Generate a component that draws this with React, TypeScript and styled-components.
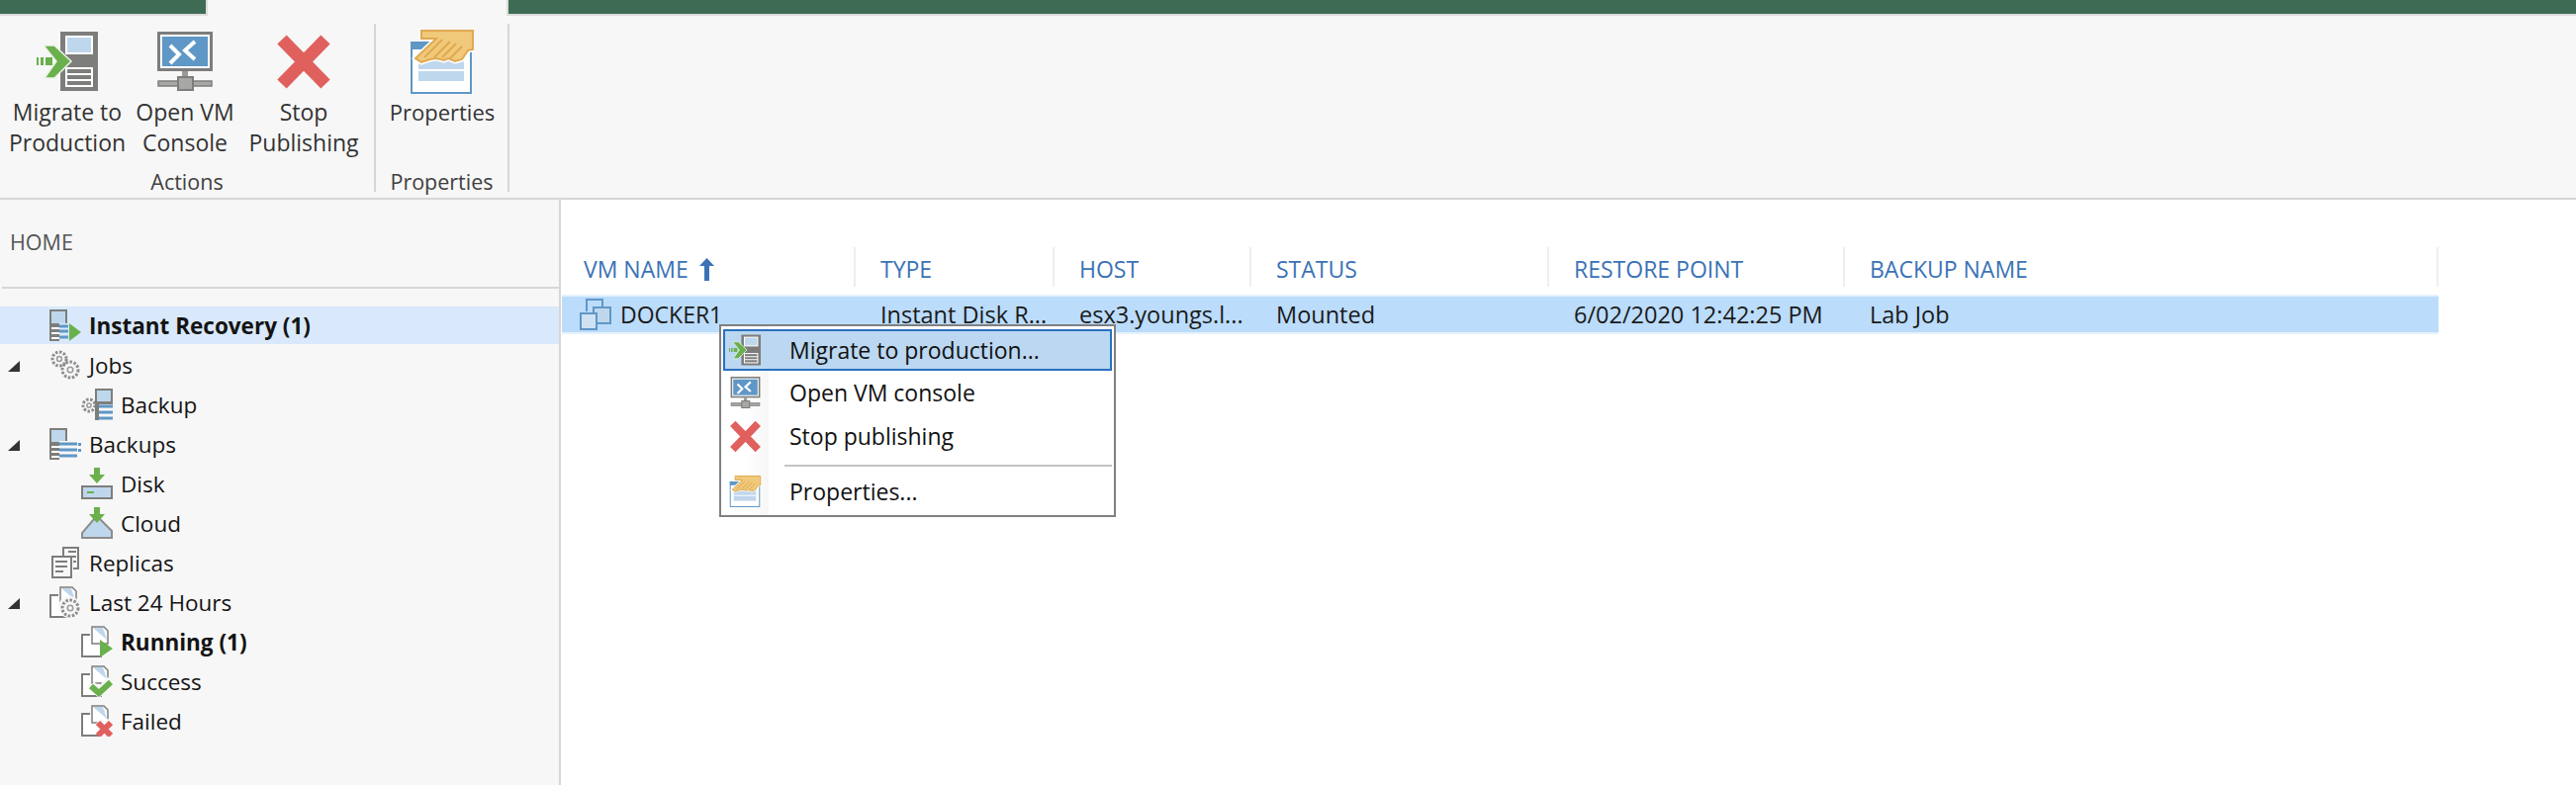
import React from "react";
import styled, {createGlobalStyle} from "styled-components";

const GREEN = "#6ab04c";
const GREY = "#7d7e7c";
const BLUE = "#5f97c6";
const PALE = "#bfd7ec";
const RED = "#e0605e";

const GlobalStyle = createGlobalStyle`
  html, body {
    margin: 0;
    padding: 0;
    background: #ffffff;
  }
  body {
    font-family: "Open Sans", "Noto Sans", sans-serif;
    font-size: 23px;
    color: #1c1c1c;
  }
`;

const Page = styled.div`
  display: flex;
  flex-flow: column;
  height: 794px;
  overflow: hidden;
`;

const TabStrip = styled.div`
  display: flex;
  height: 16px;
  background: #f7f7f7;
`;

const GreenPart = styled.div<{ $w?: number }>`
  flex: ${p => p.$w ? `0 0 ${p.$w}px` : "1"};
  background: #3e6b54;
  border-bottom: 2px solid #dcdcdc;
  box-sizing: border-box;
`;

const ActiveTab = styled.div`
  flex: 0 0 306px;
  box-sizing: border-box;
  border-left: 2px solid #dcdcdc;
  border-right: 2px solid #dcdcdc;
`;

const Ribbon = styled.div`
  display: flex;
  height: 176px;
  padding-top: 8px;
  background: #f7f7f7;
  border-bottom: 2px solid #d6d6d6;
`;

const Group = styled.div<{ $w: number }>`
  display: flex;
  flex-flow: column;
  box-sizing: border-box;
  width: ${p => p.$w}px;
  height: 170px;
  border-right: 2px solid #d6d6d6;
`;

const GroupButtons = styled.div`
  display: flex;
  height: 150px;
  padding-left: 8px;
`;

const GroupLabel = styled.div`
  height: 20px;
  line-height: 20px;
  text-align: center;
  color: #404040;
  font-size: 21.5px;
`;

const RibbonButton = styled.div<{ $w: number }>`
  display: flex;
  flex-flow: column;
  align-items: center;
  width: ${p => p.$w}px;
`;

const RibbonIcon = styled.div`
  display: flex;
  align-items: center;
  justify-content: center;
  box-sizing: border-box;
  height: 74px;
  padding-top: 2px;
`;

const RibbonText = styled.div<{ $compact?: boolean }>`
  text-align: center;
  line-height: 31px;
  white-space: pre-line;
  color: #333333;
  font-size: ${p => p.$compact ? 22 : 23}px;
`;

const Body = styled.div`
  flex: 1;
  display: flex;
  min-height: 0;
`;

const Sidebar = styled.div`
  flex: 0 0 565px;
  background: #f7f7f7;
  border-right: 2px solid #d6d6d6;
`;

const HomeTitle = styled.div`
  height: 88px;
  margin-left: 2px;
  padding-left: 8px;
  border-bottom: 2px solid #d6d6d6;
  line-height: 86px;
  font-size: 21.5px;
  color: #555555;
`;

const Tree = styled.div`
  display: flex;
  flex-flow: column;
  gap: 2px;
  padding-top: 18px;
`;

const TreeRow = styled.div<{ $level: number; $selected?: boolean }>`
  display: flex;
  align-items: center;
  height: 38px;
  padding-left: ${p => 50 + p.$level * 32}px;
  position: relative;
  background: ${p => p.$selected ? "#d9e9fb" : "transparent"};
`;

const Expander = styled.span`
  position: absolute;
  left: 8px;
  top: 15px;
  width: 0;
  height: 0;
  border-style: solid;
  border-width: 0 0 11px 12px;
  border-color: transparent transparent #333333 transparent;
`;

const TreeLabel = styled.span<{ $bold?: boolean }>`
  margin-left: 8px;
  font-size: 22.5px;
  font-weight: ${p => p.$bold ? 700 : 400};
  color: #141414;
`;

const TreeIcon = styled.span`
  display: flex;
  width: 32px;
  height: 32px;
`;

const Main = styled.div`
  flex: 1;
  position: relative;
  padding-top: 48px;
  background: #ffffff;
`;

const columns = "298px 201px 199px 301px 299px 600px";

const HeaderRow = styled.div`
  display: grid;
  grid-template-columns: ${columns};
  height: 40px;
`;

const HeaderCell = styled.div<{ $first?: boolean }>`
  display: flex;
  align-items: center;
  gap: 11px;
  box-sizing: border-box;
  padding: 4px 0 0 ${p => p.$first ? 23 : 25}px;
  border-right: 2px solid #eeeeee;
  color: #3a72b6;
  font-size: 23px;
  white-space: nowrap;
`;

const DataRow = styled.div`
  display: grid;
  grid-template-columns: ${columns};
  box-sizing: border-box;
  width: 1897px;
  height: 40px;
  margin: 8px 0 0 1px;
  background: #bbdcfb;
  border: solid #e6f2fe;
  border-width: 2px 0;
`;

const DataCell = styled.div`
  display: flex;
  align-items: center;
  padding-left: 24px;
  white-space: nowrap;
  overflow: hidden;
  color: #1a1a1a;
  font-size: 23.5px;
`;

const NameCell = styled(DataCell)`
  padding-left: 18px;
  gap: 9px;
  font-size: 23px;
`;

const ContextMenu = styled.div`
  position: absolute;
  left: 160px;
  top: 126px;
  width: 401px;
  height: 195px;
  box-sizing: border-box;
  padding: 3px 2px 2px;
  border: 2px solid #808080;
  background: linear-gradient(90deg, #ffffff 0, #ffffff 24px, #f6f7f6 46px, #f6f7f6 48px, #ffffff 48px);
`;

const MenuItem = styled.div<{ $active?: boolean }>`
  display: flex;
  align-items: center;
  box-sizing: border-box;
  height: ${p => p.$active ? 42 : 44}px;
  border: 2px solid ${p => p.$active ? "#2a70c0" : "transparent"};
  background: ${p => p.$active ? "#bbd7f1" : "transparent"};
  color: #111111;
`;

const MenuIcon = styled.span`
  display: flex;
  align-items: center;
  justify-content: center;
  flex: 0 0 40px;
  margin-right: 25px;
`;

const MenuRule = styled.div`
  height: 2px;
  margin: 7px 0 3px 62px;
  background: #c4c4c4;
`;

const Glyph = styled.svg<{ $w: number; $h: number }>`
  display: block;
  width: ${p => p.$w}px;
  height: ${p => p.$h}px;
`;

const MigrateIcon: React.FC<{ w: number; h: number }> = ({w, h}) => (
    <Glyph $w={w} $h={h} viewBox="0 0 62 60">
        <rect x="24" y="0" width="38" height="60" fill={GREY}/>
        <rect x="30" y="5" width="26" height="17" fill={PALE} stroke="#fff" strokeWidth="2"/>
        <rect x="30" y="37" width="26" height="18" fill={GREY} stroke="#fff" strokeWidth="2"/>
        <path d="M30 43 H56 M30 49 H56" stroke="#fff" strokeWidth="2"/>
        <path d="M7 14 H18 L35 30 L18 47 H8 L20 30 Z" fill={GREEN} stroke="#eef3ea" strokeWidth="1.5"/>
        <path d="M0 26 h2 v8 h-2 z M4 26 h3 v8 h-3 z M9 26 h7 v8 h-7 z" fill={GREEN}/>
    </Glyph>
);

const ConsoleIcon: React.FC<{ w: number; h: number }> = ({w, h}) => (
    <Glyph $w={w} $h={h} viewBox="0 0 56 60">
        <rect x="1.5" y="1.5" width="53" height="37" fill="#fff" stroke={GREY} strokeWidth="3"/>
        <rect x="5" y="5" width="46" height="30" fill={BLUE}/>
        <path d="M13 14 L22 23 L13 32 M38 10 L28 19 L38 28" fill="none" stroke="#fff" strokeWidth="4"/>
        <rect x="25" y="40" width="6" height="6" fill="#9a9b99"/>
        <rect x="1" y="50" width="54" height="5" fill="#a8a9a7" stroke={GREY} strokeWidth="1.5"/>
        <rect x="21" y="46" width="15" height="13" fill="#a8a9a7" stroke={GREY} strokeWidth="2"/>
    </Glyph>
);

const StopIcon: React.FC<{ w: number; h: number }> = ({w, h}) => (
    <Glyph $w={w} $h={h} viewBox="0 0 56 57">
        <path d="M6 6 L50 51 M50 6 L6 51" stroke={RED} strokeWidth="13" fill="none"/>
    </Glyph>
);

const handOutline = "M11 1 H63 V20 L58 21 L52 30 L45 32 L38 29 L34 31 L26 29 L20 30 L11 33 L5 29 L26 9 H11 Z";

const PropertiesIcon: React.FC<{ w: number; h: number }> = ({w, h}) => (
    <Glyph $w={w} $h={h} viewBox="0 0 64 65">
        <rect x="1" y="13" width="60" height="51" fill="#fff" stroke={BLUE} strokeWidth="2"/>
        <rect x="0" y="12" width="20" height="8" fill={BLUE}/>
        <rect x="8" y="30" width="46" height="10" fill={PALE}/>
        <rect x="8" y="42" width="46" height="10" fill={PALE}/>
        <path d={handOutline} fill="none" stroke="#ffffff" strokeWidth="5"/>
        <path d={handOutline} fill="#f0c97a" stroke="#dfa94f" strokeWidth="2"/>
        <path d="M14 28 L32 10 M24 28 L40 12 M32 28 L46 14 M40 29 L52 17" stroke="#dfa94f" strokeWidth="2"/>
    </Glyph>
);

const ServerBase = () => (
    <>
        <rect x="0" y="0" width="18" height="32" fill={GREY}/>
        <rect x="2" y="2" width="14" height="12" fill={PALE}/>
        <path d="M2 19 H10 M2 24 H10 M2 29 H10" stroke="#fff" strokeWidth="2"/>
    </>
);

const Gear: React.FC<{ x: number; y: number; r: number }> = ({x, y, r}) => (
    <>
        <circle cx={x} cy={y} r={r} fill="none" stroke="#8c8c8c" strokeWidth="3" strokeDasharray="2.5 1.6"/>
        <circle cx={x} cy={y} r={r * 0.35} fill="none" stroke="#9a9a9a" strokeWidth="1.5"/>
    </>
);

const DocBase = () => (
    <>
        <path d="M9 9 H1 V31 H20 V16" fill="#fff" stroke={GREY} strokeWidth="2"/>
        <path d="M11 1 H23 L27 5 V18 H11 Z" fill="#fff" stroke={GREY} strokeWidth="1.5"/>
        <path d="M12 2 H22 L26 14 Z" fill={PALE}/>
    </>
);

const SmallIcon: React.FC<{ name: string }> = ({name}) => {
    const shapes: Record<string, React.ReactNode> = {
        instant: <>
            <ServerBase/>
            <rect x="10" y="14" width="10" height="18" fill="#d9e9fb"/>
            <path d="M10 17 H19 M10 22 H19 M10 28 H19" stroke={BLUE} strokeWidth="3"/>
            <path d="M20 14 L32 23 L20 32 Z" fill={GREEN}/>
        </>,
        jobs: <>
            <Gear x={10} y={10} r={7}/>
            <Gear x={21} y={21} r={8}/>
        </>,
        backup: <>
            <Gear x={8} y={17} r={6}/>
            <rect x="14" y="0" width="18" height="16" fill={GREY}/>
            <rect x="16" y="2" width="14" height="11" fill={PALE}/>
            <rect x="14" y="14" width="4" height="18" fill={GREY}/>
            <path d="M18 18 H32 M18 24 H32 M18 30 H32" stroke={BLUE} strokeWidth="3"/>
        </>,
        backups: <>
            <ServerBase/>
            <rect x="10" y="13" width="22" height="19" fill="#f7f7f7"/>
            <path d="M10 16 H28 M10 22 H28 M10 28 H28" stroke={BLUE} strokeWidth="3"/>
            <path d="M29 15 h3 v3 h-3 z M29 21 h3 v3 h-3 z" fill={BLUE}/>
        </>,
        disk: <>
            <rect x="1" y="19" width="30" height="12" fill={PALE} stroke={GREY} strokeWidth="2"/>
            <rect x="6" y="24" width="7" height="2" fill={GREEN}/>
            <path d="M13 0 H19 V7 H24 L16 16 L8 7 H13 Z" fill={GREEN}/>
        </>,
        cloud: <>
            <path d="M1 31 V26 L13 12 H19 L31 24 V31 Z" fill={PALE} stroke="#8c8c8c" strokeWidth="2"/>
            <path d="M13 0 H19 V7 H24 L16 16 L8 7 H13 Z" fill={GREEN}/>
        </>,
        replicas: <>
            <path d="M14 10 V1 H29 V22 H24" fill="none" stroke={GREY} strokeWidth="2"/>
            <path d="M19 5 H27 M19 10 H27 M24 15 H27" stroke={GREY} strokeWidth="2"/>
            <rect x="3" y="10" width="19" height="21" fill="#f7f7f7" stroke={GREY} strokeWidth="2"/>
            <path d="M6 15 H18 M6 20 H18 M6 25 H14" stroke={GREY} strokeWidth="2"/>
        </>,
        last: <>
            <DocBase/>
            <circle cx="20" cy="21" r="11" fill="#f7f7f7"/>
            <Gear x={21} y={22} r={8}/>
        </>,
        running: <>
            <DocBase/>
            <path d="M19 14 L32 23 L19 32 Z" fill={GREEN}/>
        </>,
        success: <>
            <DocBase/>
            <path d="M10 20 L18 27 L30 15" fill="none" stroke="#f7f7f7" strokeWidth="9"/>
            <path d="M10 21 L18 28 L30 17" fill="none" stroke={GREEN} strokeWidth="6"/>
        </>,
        failed: <>
            <DocBase/>
            <path d="M17 17 L30 30 M30 17 L17 30" stroke="#f7f7f7" strokeWidth="9"/>
            <path d="M17 18 L30 31 M30 18 L17 31" stroke={RED} strokeWidth="6"/>
        </>,
    };
    return <Glyph $w={32} $h={32} viewBox="0 0 32 32">{shapes[name]}</Glyph>;
};

const VmIcon = () => (
    <Glyph $w={32} $h={32} viewBox="0 0 32 32">
        <path d="M7 13 V1 H23 V8" fill="none" stroke={BLUE} strokeWidth="2"/>
        <rect x="14" y="9" width="17" height="16" fill={PALE} stroke={BLUE} strokeWidth="2"/>
        <rect x="1" y="15" width="16" height="16" fill="#cfe2f3" stroke={BLUE} strokeWidth="2"/>
    </Glyph>
);

const SortArrow = () => (
    <Glyph $w={15} $h={23} viewBox="0 0 15 23">
        <path d="M7.5 0 L15 8 H10 V23 H5 V8 H0 Z" fill="#3a72b6"/>
    </Glyph>
);

const treeRows = [
    {label: "Instant Recovery (1)", icon: "instant", level: 0, bold: true, selected: true},
    {label: "Jobs", icon: "jobs", level: 0, open: true},
    {label: "Backup", icon: "backup", level: 1},
    {label: "Backups", icon: "backups", level: 0, open: true},
    {label: "Disk", icon: "disk", level: 1},
    {label: "Cloud", icon: "cloud", level: 1},
    {label: "Replicas", icon: "replicas", level: 0},
    {label: "Last 24 Hours", icon: "last", level: 0, open: true},
    {label: "Running (1)", icon: "running", level: 1, bold: true},
    {label: "Success", icon: "success", level: 1},
    {label: "Failed", icon: "failed", level: 1},
];

export default function App() {
    return <Page>
        <GlobalStyle/>
        <TabStrip>
            <GreenPart $w={208}/>
            <ActiveTab/>
            <GreenPart/>
        </TabStrip>
        <Ribbon>
            <Group $w={380}>
                <GroupButtons>
                    <RibbonButton $w={120}>
                        <RibbonIcon><MigrateIcon w={62} h={60}/></RibbonIcon>
                        <RibbonText>{"Migrate to\nProduction"}</RibbonText>
                    </RibbonButton>
                    <RibbonButton $w={118}>
                        <RibbonIcon><ConsoleIcon w={56} h={60}/></RibbonIcon>
                        <RibbonText>{"Open VM\nConsole"}</RibbonText>
                    </RibbonButton>
                    <RibbonButton $w={122}>
                        <RibbonIcon><StopIcon w={56} h={57}/></RibbonIcon>
                        <RibbonText>{"Stop\nPublishing"}</RibbonText>
                    </RibbonButton>
                </GroupButtons>
                <GroupLabel>Actions</GroupLabel>
            </Group>
            <Group $w={135}>
                <GroupButtons>
                    <RibbonButton $w={118}>
                        <RibbonIcon><PropertiesIcon w={64} h={65}/></RibbonIcon>
                        <RibbonText $compact>Properties</RibbonText>
                    </RibbonButton>
                </GroupButtons>
                <GroupLabel>Properties</GroupLabel>
            </Group>
        </Ribbon>
        <Body>
            <Sidebar>
                <HomeTitle>HOME</HomeTitle>
                <Tree>
                    {treeRows.map(row =>
                        <TreeRow key={row.label} $level={row.level} $selected={row.selected}>
                            {row.open && <Expander/>}
                            <TreeIcon><SmallIcon name={row.icon}/></TreeIcon>
                            <TreeLabel $bold={row.bold}>{row.label}</TreeLabel>
                        </TreeRow>
                    )}
                </Tree>
            </Sidebar>
            <Main>
                <HeaderRow>
                    <HeaderCell $first>VM NAME <SortArrow/></HeaderCell>
                    <HeaderCell>TYPE</HeaderCell>
                    <HeaderCell>HOST</HeaderCell>
                    <HeaderCell>STATUS</HeaderCell>
                    <HeaderCell>RESTORE POINT</HeaderCell>
                    <HeaderCell>BACKUP NAME</HeaderCell>
                </HeaderRow>
                <DataRow>
                    <NameCell><VmIcon/>DOCKER1</NameCell>
                    <DataCell>Instant Disk R...</DataCell>
                    <DataCell>esx3.youngs.l...</DataCell>
                    <DataCell>Mounted</DataCell>
                    <DataCell>6/02/2020 12:42:25 PM</DataCell>
                    <DataCell>Lab Job</DataCell>
                </DataRow>
                <ContextMenu>
                    <MenuItem $active>
                        <MenuIcon><MigrateIcon w={32} h={32}/></MenuIcon>
                        Migrate to production...
                    </MenuItem>
                    <MenuItem>
                        <MenuIcon><ConsoleIcon w={31} h={32}/></MenuIcon>
                        Open VM console
                    </MenuItem>
                    <MenuItem>
                        <MenuIcon><StopIcon w={33} h={33}/></MenuIcon>
                        Stop publishing
                    </MenuItem>
                    <MenuRule/>
                    <MenuItem>
                        <MenuIcon><PropertiesIcon w={33} h={32}/></MenuIcon>
                        Properties...
                    </MenuItem>
                </ContextMenu>
            </Main>
        </Body>
    </Page>;
}
